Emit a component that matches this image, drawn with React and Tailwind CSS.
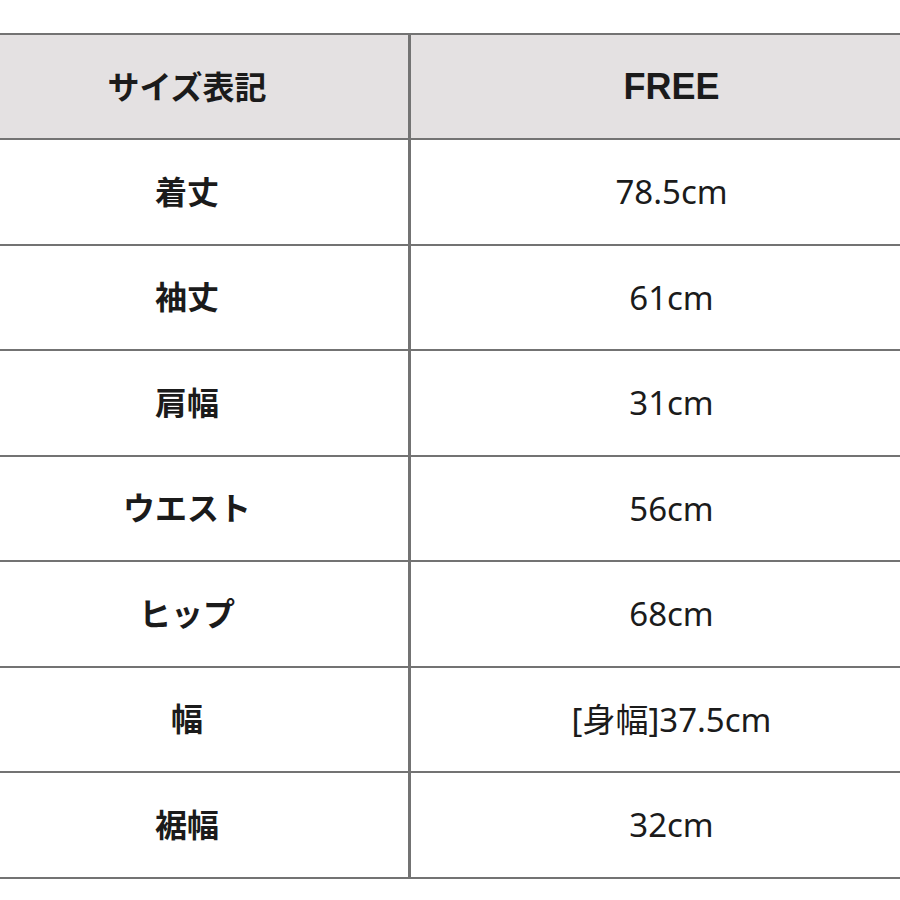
const rows = [
  ["着丈", "78.5cm"],
  ["袖丈", "61cm"],
  ["肩幅", "31cm"],
  ["ウエスト", "56cm"],
  ["ヒップ", "68cm"],
  ["幅", "[身幅]37.5cm"],
  ["裾幅", "32cm"],
];

const font = { fontFamily: '"Noto Sans", "Noto Sans CJK JP", sans-serif' };

export default function App() {
  return (
    <div className="w-[900px] h-[900px] overflow-hidden bg-white pt-[33px] text-[#1b1b1b]" style={font}>
      <div className="-ml-[34px] w-[966px] border-t-2 border-[#737373]">
        <div className="grid grid-cols-[445px_521px] h-[105px] border-b-2 border-[#737373] bg-[#e4e1e2]">
          <div className="flex items-center justify-center border-r-[3px] border-[#737373] text-[32px] font-bold">
            サイズ表記
          </div>
          <div className="flex items-center justify-center text-[36px] font-bold font-['Liberation_Sans',sans-serif]">
            FREE
          </div>
        </div>
        {rows.map(([label, value]) => (
          <div
            key={label}
            className="grid grid-cols-[445px_521px] h-[105.5px] border-b-2 border-[#737373]"
          >
            <div className="flex items-center justify-center border-r-[3px] border-[#737373] text-[32px] font-bold">
              {label}
            </div>
            <div className="flex items-center justify-center text-[33px]">{value}</div>
          </div>
        ))}
      </div>
    </div>
  );
}
